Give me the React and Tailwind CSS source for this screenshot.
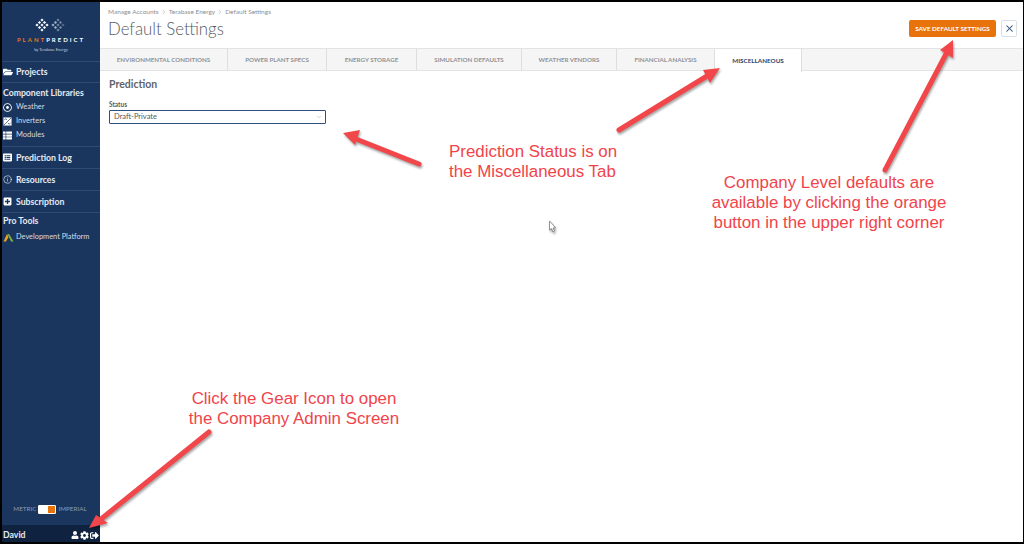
import React from 'react'
import { Info, X, ChevronDown, ChevronRight } from 'lucide-react'
import { FaFolderOpen, FaListAlt, FaPlusSquare, FaThList, FaRegDotCircle, FaUser, FaCog, FaSignOutAlt } from 'react-icons/fa'

const tabs = [
  ['ENVIRONMENTAL CONDITIONS', 'w-[128px]'],
  ['POWER PLANT SPECS', 'w-[99px]'],
  ['ENERGY STORAGE', 'w-[90px]'],
  ['SIMULATION DEFAULTS', 'w-[105px]'],
  ['WEATHER VENDORS', 'w-[95px]'],
  ['FINANCIAL ANALYSIS', 'w-[98px]'],
]

function LogoMark() {
  const dots = []
  // two staggered diamonds of small squares, the right one fading out
  for (const [cx, right] of [[8, false], [24, true]]) {
    for (let i = -3; i <= 3; i++) {
      for (let j = -2; j <= 2; j++) {
        if ((i + j) % 2 !== 0 || Math.abs(i) + Math.abs(j) > 3) continue
        const x = cx + i * 2.5
        const y = 7 + j * 2.5
        const fill = right ? (i < 0 ? '#a7b2c4' : i < 2 ? '#76879f' : '#566a88') : '#ffffff'
        dots.push(<rect key={cx + '-' + i + '-' + j} x={x - 1.1} y={y - 1.1} width="2.2" height="2.2" fill={fill} transform={`rotate(45 ${x} ${y})`} />)
      }
    }
  }
  return (
    <svg width="34" height="14" viewBox="0 0 34 14">
      {dots}
    </svg>
  )
}

function SectionRow({ icon, label }) {
  return (
    <div className="h-[22px] flex items-center border-b border-white/10 pl-[1px]">
      <span className="w-[13px] flex text-white">{icon}</span>
      <span className="text-[8.7px] font-bold text-[#e6eaf0]">{label}</span>
    </div>
  )
}

function SubRow({ icon, label }) {
  return (
    <div className="h-[14px] flex items-center pl-[1px]">
      <span className="w-[13px] flex text-white">{icon}</span>
      <span className="text-[7.5px] text-[#d5dbe5]">{label}</span>
    </div>
  )
}

function Sidebar() {
  return (
    <aside className="w-[98px] shrink-0 bg-[#1a365f] flex flex-col">
      <div className="h-[60px] border-b border-white/10 flex flex-col items-center pt-[16px]">
        <LogoMark />
        <div className="mt-[4px] text-[6px] tracking-[2px] font-bold leading-[8px] whitespace-nowrap">
          <span className="text-[#e8791a]">PLANT</span>
          <span className="text-white">PREDICT</span>
        </div>
        <div className="mt-[3px] text-[4px] text-[#c8d0dc] leading-[6px]">by Terabase Energy</div>
      </div>
      <div className="h-[21px] flex items-center border-b border-white/10 pl-[1px]">
        <span className="w-[13px] flex text-white"><FaFolderOpen size={10} /></span>
        <span className="text-[8.7px] font-bold text-[#e6eaf0]">Projects</span>
      </div>
      <div className="pt-[2px] pb-[4px] border-b border-white/10">
        <div className="h-[15px] flex items-center pl-[1px] text-[8.7px] font-bold text-[#e6eaf0]">Component Libraries</div>
        <SubRow icon={<FaRegDotCircle size={9} />} label="Weather" />
        <SubRow
          icon={
            <svg width="9" height="9" viewBox="0 0 10 10">
              <rect x="0.5" y="0.5" width="9" height="9" fill="white" />
              <path d="M1 9 L9 1 M1.5 3 Q3 1 4.5 3 M5.5 7 Q7 9 8.5 6.5" stroke="#1a365f" strokeWidth="0.8" fill="none" />
            </svg>
          }
          label="Inverters"
        />
        <SubRow icon={<FaThList size={9} />} label="Modules" />
      </div>
      <SectionRow icon={<FaListAlt size={9} />} label="Prediction Log" />
      <SectionRow icon={<Info size={9} strokeWidth={1.5} />} label="Resources" />
      <SectionRow icon={<FaPlusSquare size={9} />} label="Subscription" />
      <div className="h-[16px] flex items-center pl-[1px] text-[8.7px] font-bold text-[#e6eaf0]">Pro Tools</div>
      <div className="h-[16px] flex items-center pl-[1px]">
        <span className="w-[13px] flex">
          <svg width="11" height="9" viewBox="0 0 11 9">
            <path d="M0.5 8.5 L4 1 L5.5 4 L3 8.5 Z" fill="#eea21b" />
            <path d="M4.5 1 L6 1 L10.5 8.5 L8 8.5 Z" fill="#7fb13c" />
          </svg>
        </span>
        <span className="text-[7.4px] text-[#d5dbe5] whitespace-nowrap">Development Platform</span>
      </div>
      <div className="flex-1" />
      <div className="h-[20px] mb-[6px] pr-[2px] flex items-center justify-center gap-[2px] text-[6.3px] text-[#8d9ab0]">
        <span>METRIC</span>
        <span className="w-[18px] h-[9px] bg-white rounded-[1px] border border-white flex justify-end">
          <span className="w-[7px] h-[7px] bg-[#e8730a]" />
        </span>
        <span>IMPERIAL</span>
      </div>
      <div className="h-[17px] bg-[#0f2340] flex items-center pt-[3px] pl-[1px] pr-[1px] text-white">
        <span className="text-[8.7px] font-bold text-[#e6eaf0]">David</span>
        <span className="flex-1" />
        <FaUser size={8} />
        <FaCog size={9} className="ml-[1px]" />
        <FaSignOutAlt size={9} className="ml-[1px]" />
      </div>
    </aside>
  )
}

function Main() {
  return (
    <main className="flex-1 bg-white flex flex-col min-w-0">
      <div className="h-[45px] flex items-start pl-[8px] pr-[6px] shrink-0">
        <div>
          <div className="mt-[5px] flex items-center text-[6.5px] leading-[10px] text-[#8a8f96]">
            Manage Accounts
            <ChevronRight size={6} className="mx-[2px]" />
            Terabase Energy
            <ChevronRight size={6} className="mx-[2px]" />
            Default Settings
          </div>
          <h1 className="mt-[1px] text-[16.8px] leading-[22px] font-light text-[#555b63]">Default Settings</h1>
        </div>
        <div className="flex-1" />
        <button className="mt-[18px] w-[87px] h-[17px] bg-[#e8730a] rounded-[2px] text-white text-[6.3px] font-bold whitespace-nowrap">
          SAVE DEFAULT SETTINGS
        </button>
        <button className="mt-[18px] ml-[5px] w-[16px] h-[17px] border border-[#d8dfe8] rounded-[2px] flex items-center justify-center text-[#2a4a75]">
          <X size={11} strokeWidth={2.2} />
        </button>
      </div>
      <div className="h-[23px] mt-[1px] shrink-0 flex bg-[#f5f5f5] border-y border-[#e1e3e5]">
        {tabs.map(([label, width]) => (
          <div key={label} className={`${width} shrink-0 border-r border-[#dcdee0] flex items-center justify-center text-[6.2px] font-bold text-[#8f9398] whitespace-nowrap`}>
            {label}
          </div>
        ))}
        <div className="w-[87px] h-[23px] shrink-0 bg-white border-r border-[#dcdee0] flex items-center justify-center text-[6.3px] font-bold text-[#2c4468]">
          MISCELLANEOUS
        </div>
      </div>
      <div className="pl-[9px] pt-[6px]">
        <h2 className="text-[10.5px] leading-[14px] font-bold text-[#5f646b]">Prediction</h2>
        <div className="mt-[9px] text-[6.5px] leading-[9px] font-bold text-[#555a60]">Status</div>
        <div className="mt-[1px] w-[217px] h-[14px] border border-[#2f4f7c] rounded-[1px] flex items-center justify-between pl-[4px] pr-[3px] text-[7.5px] text-[#555a60]">
          Draft-Private
          <ChevronDown size={6} className="text-[#9aa0a6]" />
        </div>
      </div>
    </main>
  )
}

function Arrows() {
  const arrows = [
    'M619 130 L707 76',
    'M885 170 L946 54',
    'M419 164 L356 139',
    'M209 432 L101 519',
  ]
  const heads = [
    '720,68 703,70 710,83',
    '953,40 940,50 953,58',
    '343,133 360,130 355,145',
    '89,528 96,515 108,523',
  ]
  return (
    <svg className="absolute inset-0 pointer-events-none drop-shadow-[1px_2px_1px_rgba(0,0,0,0.35)]" width="1024" height="544">
      {arrows.map((d) => (
        <path key={d} d={d} stroke="#f2474a" strokeWidth="5" strokeLinecap="round" fill="none" />
      ))}
      {heads.map((p) => (
        <polygon key={p} points={p} fill="#f2474a" />
      ))}
      {/* mouse pointer */}
      <path d="M549.5 221 L549.5 230 L551.5 228.5 L553 232 L554.5 231 L553 228 L555.5 227.5 Z" fill="white" stroke="#777" strokeWidth="0.8" />
    </svg>
  )
}

function Note({ className, children }) {
  return (
    <div className={`absolute text-center text-[16.9px] leading-[20px] text-[#f0444a] whitespace-nowrap font-['Liberation_Sans',sans-serif] ${className}`}>
      {children}
    </div>
  )
}

export default function App() {
  return (
    <div className="relative w-[1024px] h-[544px] overflow-hidden bg-black pt-[2px] pl-[2px] pr-[1px] pb-[2px] font-['Lato','Open_Sans',sans-serif]">
      <div className="flex h-full">
        <Sidebar />
        <Main />
      </div>
      <Arrows />
      <Note className="left-[449px] top-[142px] !text-left">
        Prediction Status is on<br />the Miscellaneous Tab
      </Note>
      <Note className="left-[703px] top-[173px] w-[252px]">
        Company Level defaults are<br />available by clicking the orange<br />button in the upper right corner
      </Note>
      <Note className="left-[174px] top-[389px] w-[240px]">
        Click the Gear Icon to open<br />the Company Admin Screen
      </Note>
    </div>
  )
}
